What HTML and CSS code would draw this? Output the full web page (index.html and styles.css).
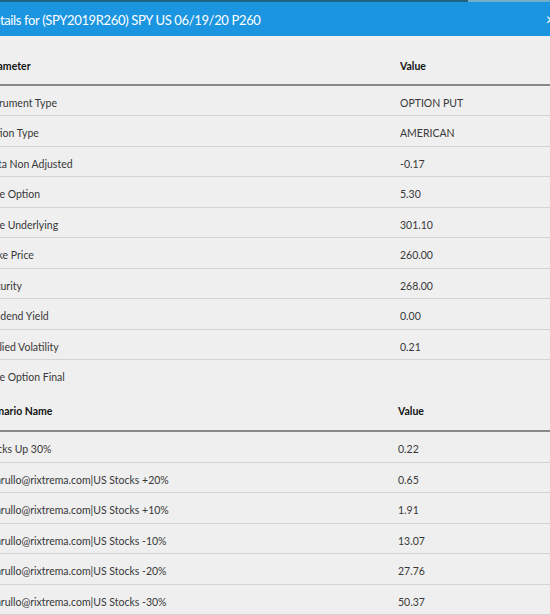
FILE: index.html
```html
<!DOCTYPE html>
<html>
<head>
<meta charset="utf-8">
<link rel="stylesheet" href="styles.css">
</head>
<body>
<div class="frame">
  <div class="topline"></div>
  <div class="titlebar">
    <span class="title">Details for (SPY2019R260) SPY US 06/19/20 P260</span>
    <span class="close">×</span>
  </div>

  <div class="table first">
    <div class="row head"><div class="c1">Parameter</div><div class="c2">Value</div></div>
    <div class="row"><div class="c1">Instrument Type</div><div class="c2">OPTION PUT</div></div>
    <div class="row"><div class="c1">Option Type</div><div class="c2">AMERICAN</div></div>
    <div class="row"><div class="c1">Delta Non Adjusted</div><div class="c2">-0.17</div></div>
    <div class="row"><div class="c1">Price Option</div><div class="c2">5.30</div></div>
    <div class="row"><div class="c1">Price Underlying</div><div class="c2">301.10</div></div>
    <div class="row"><div class="c1">Strike Price</div><div class="c2">260.00</div></div>
    <div class="row"><div class="c1">Maturity</div><div class="c2">268.00</div></div>
    <div class="row"><div class="c1">Dividend Yield</div><div class="c2">0.00</div></div>
    <div class="row"><div class="c1">Implied Volatility</div><div class="c2">0.21</div></div>
    <div class="row last"><div class="c1">Price Option Final</div><div class="c2"></div></div>
  </div>

  <div class="table second">
    <div class="row head"><div class="c1">Scenario Name</div><div class="c2">Value</div></div>
    <div class="row"><div class="c1">Stocks Up 30%</div><div class="c2">0.22</div></div>
    <div class="row"><div class="c1">mcarullo@rixtrema.com|US Stocks +20%</div><div class="c2">0.65</div></div>
    <div class="row"><div class="c1">mcarullo@rixtrema.com|US Stocks +10%</div><div class="c2">1.91</div></div>
    <div class="row"><div class="c1">mcarullo@rixtrema.com|US Stocks -10%</div><div class="c2">13.07</div></div>
    <div class="row"><div class="c1">mcarullo@rixtrema.com|US Stocks -20%</div><div class="c2">27.76</div></div>
    <div class="row"><div class="c1">mcarullo@rixtrema.com|US Stocks -30%</div><div class="c2">50.37</div></div>
  </div>
</div>
</body>
</html>
```
FILE: styles.css
```css
html, body {
  margin: 0;
  padding: 0;
  background: #efefef;
  overflow: hidden;
}

.frame {
  width: 580px;
  font-family: Lato, "Open Sans", sans-serif;
  font-size: 10.5px;
  color: #383838;
}

.topline {
  height: 2px;
  background: linear-gradient(90deg, #1d6380 0, #1d6380 468px, #74aecb 468px);
}

.titlebar {
  height: 34px;
  margin-left: -16px;
  background: #1b95e0;
  display: flex;
  align-items: center;
  color: #ffffff;
}

.title {
  font-size: 13px;
  letter-spacing: -0.35px;
  line-height: 18px;
  padding-top: 2px;
}

.close {
  margin-left: auto;
  margin-right: 25px;
  font-size: 16px;
  line-height: 18px;
}

.table {
  margin-left: -26px;
}

.first {
  margin-top: 10px;
}

.row {
  display: flex;
  box-sizing: border-box;
  height: 30.45px;
  padding-top: 9px;
  line-height: 16px;
  border-bottom: 1px solid #d3d3d3;
}

.row.last {
  border-bottom: none;
  height: 30.5px;
}

.row.head {
  height: auto;
  padding-top: 12px;
  padding-bottom: 10px;
  font-weight: 700;
  color: #141414;
  border-bottom: 2px solid #888888;
}

.second .row.head {
  padding-top: 12.5px;
  padding-bottom: 11.5px;
}

.c1 {
  width: 418px;
  padding-left: 8px;
  box-sizing: border-box;
  flex: none;
  white-space: nowrap;
}

.second .c1 {
  width: 416px;
}

.c2 {
  padding-left: 8px;
  white-space: nowrap;
}
```
